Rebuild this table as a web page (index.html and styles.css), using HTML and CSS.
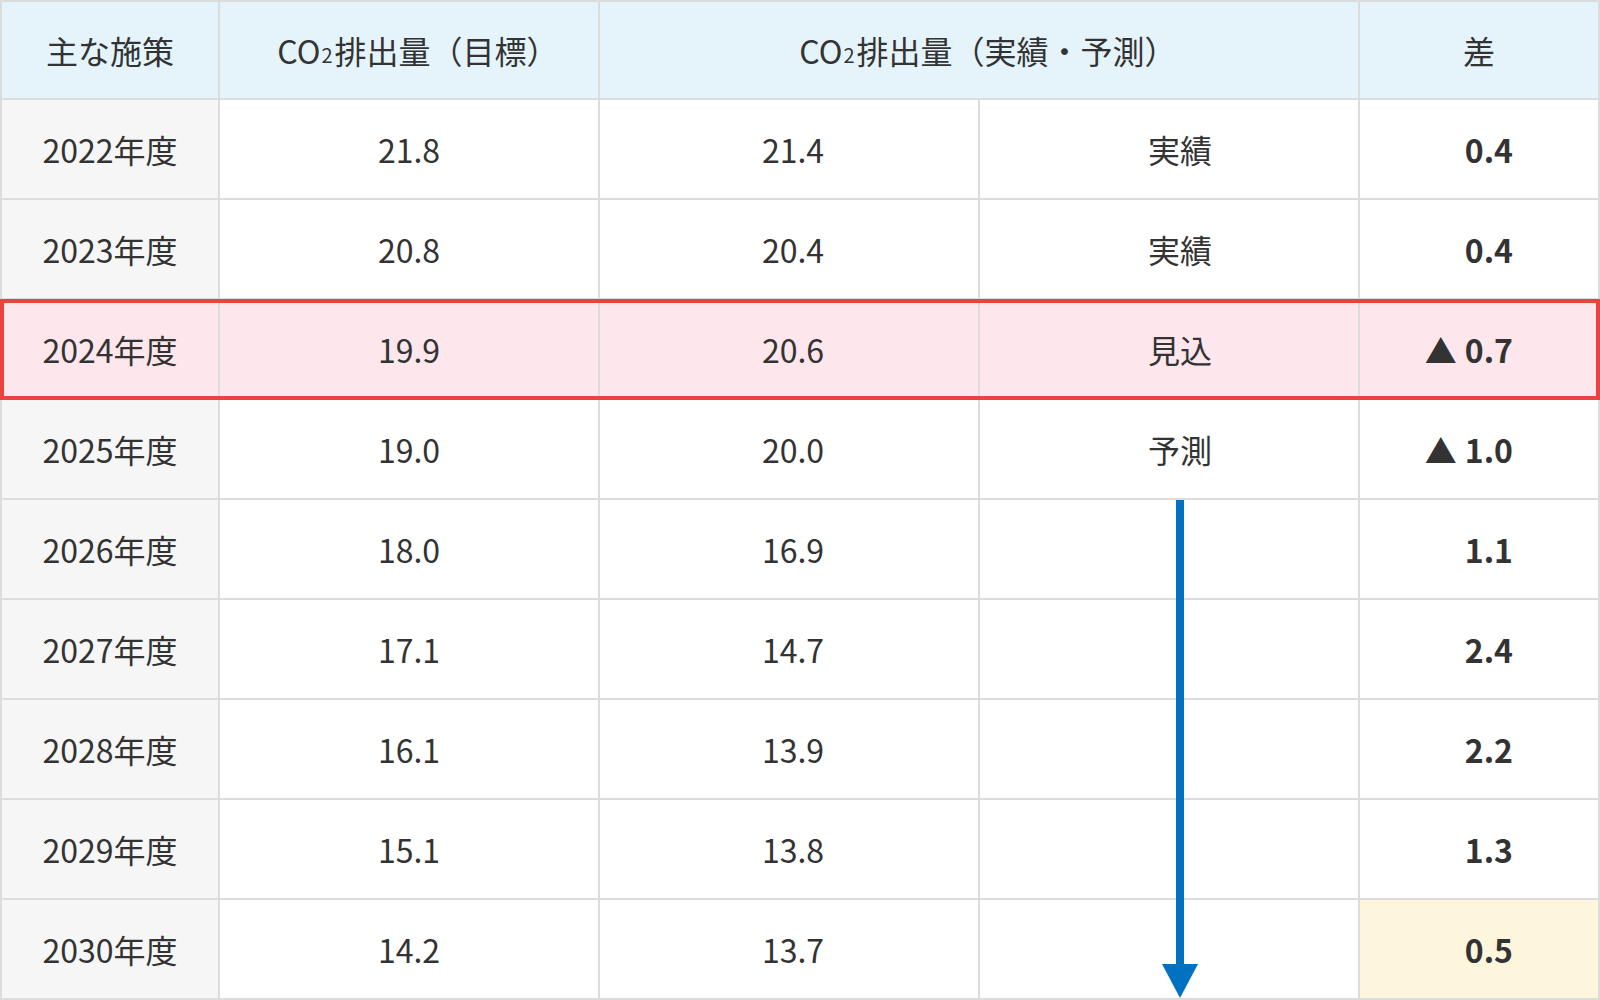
FILE: index.html
```html
<!DOCTYPE html>
<html lang="ja">
<head>
<meta charset="utf-8">
<title>CO2排出量</title>
<link rel="stylesheet" href="styles.css">
</head>
<body>
<div class="table">
  <div class="row r1">
    <div class="cell head">主な施策</div>
    <div class="cell head co2">CO<span class="sub">2</span>排出量（目標）</div>
    <div class="cell head co2 span2">CO<span class="sub">2</span>排出量（実績・予測）</div>
    <div class="cell head last">差</div>
  </div>

  <div class="row r2">
    <div class="cell year">2022年度</div>
    <div class="cell">21.8</div>
    <div class="cell actual">21.4</div>
    <div class="cell kind">実績</div>
    <div class="cell diff">0.4</div>
  </div>

  <div class="row r3">
    <div class="cell year">2023年度</div>
    <div class="cell">20.8</div>
    <div class="cell actual">20.4</div>
    <div class="cell kind">実績</div>
    <div class="cell diff">0.4</div>
  </div>

  <div class="row r4 hl">
    <div class="cell year">2024年度</div>
    <div class="cell">19.9</div>
    <div class="cell actual">20.6</div>
    <div class="cell kind">見込</div>
    <div class="cell diff"><span class="tri">▲</span>0.7</div>
  </div>

  <div class="row r5">
    <div class="cell year">2025年度</div>
    <div class="cell">19.0</div>
    <div class="cell actual">20.0</div>
    <div class="cell kind">予測</div>
    <div class="cell diff"><span class="tri">▲</span>1.0</div>
  </div>

  <div class="row r6">
    <div class="cell year">2026年度</div>
    <div class="cell">18.0</div>
    <div class="cell actual">16.9</div>
    <div class="cell kind"></div>
    <div class="cell diff">1.1</div>
  </div>

  <div class="row r7">
    <div class="cell year">2027年度</div>
    <div class="cell">17.1</div>
    <div class="cell actual">14.7</div>
    <div class="cell kind"></div>
    <div class="cell diff">2.4</div>
  </div>

  <div class="row r8">
    <div class="cell year">2028年度</div>
    <div class="cell">16.1</div>
    <div class="cell actual">13.9</div>
    <div class="cell kind"></div>
    <div class="cell diff">2.2</div>
  </div>

  <div class="row r9">
    <div class="cell year">2029年度</div>
    <div class="cell">15.1</div>
    <div class="cell actual">13.8</div>
    <div class="cell kind"></div>
    <div class="cell diff">1.3</div>
  </div>

  <div class="row r10">
    <div class="cell year">2030年度</div>
    <div class="cell">14.2</div>
    <div class="cell actual">13.7</div>
    <div class="cell kind"></div>
    <div class="cell diff goal">0.5</div>
  </div>

  <div class="highlight-frame"></div>
  <div class="arrow">
    <div class="arrow-line"></div>
    <svg class="arrow-head" width="36" height="34" viewBox="0 0 36 34"><polygon points="0,0 36,0 18,34" fill="#0072c1"/></svg>
  </div>
</div>
</body>
</html>
```

FILE: styles.css
```css
html, body {
  margin: 0;
  padding: 0;
  background: #ffffff;
}

body {
  font-family: "Noto Sans CJK JP", "Noto Sans", sans-serif;
  color: #333333;
}

.table {
  display: grid;
  grid-template-columns: 216px 378px 378px 378px 238px;
  grid-template-rows: 96px repeat(9, 98px);
  gap: 2px;
  padding: 2px;
  width: 1600px;
  height: 1000px;
  box-sizing: border-box;
  background: #dcdcdc;
}

.row {
  display: contents;
}

.r1 > .cell { grid-row: 1; }
.r2 > .cell { grid-row: 2; }
.r3 > .cell { grid-row: 3; }
.r4 > .cell { grid-row: 4; }
.r5 > .cell { grid-row: 5; }
.r6 > .cell { grid-row: 6; }
.r7 > .cell { grid-row: 7; }
.r8 > .cell { grid-row: 8; }
.r9 > .cell { grid-row: 9; }
.r10 > .cell { grid-row: 10; }

.row > .cell:nth-child(1) { grid-column: 1; }
.row > .cell:nth-child(2) { grid-column: 2; }
.row > .cell:nth-child(3) { grid-column: 3; }
.row > .cell:nth-child(4) { grid-column: 4; }
.row > .cell:nth-child(5) { grid-column: 5; }
.row > .cell.span2 { grid-column: 3 / span 2; }
.row > .cell.last { grid-column: 5; }

.cell {
  display: flex;
  align-items: center;
  justify-content: center;
  background: #ffffff;
  font-size: 32px;
  line-height: 1;
  white-space: nowrap;
}

.head {
  background: #e5f4fb;
}

.co2 {
  padding-left: 18px;
}

.sub {
  display: inline-block;
  font-size: 20px;
  margin: 0 2px 0 1px;
  transform: translateY(5px);
}

.year {
  background: #f6f6f6;
}

.actual {
  padding-left: 8px;
}

.kind {
  padding-left: 22px;
}

.diff {
  justify-content: flex-end;
  padding-right: 85px;
  font-weight: 700;
}

.tri {
  font-weight: 400;
  font-size: 32px;
  margin-right: 8px;
}

.goal {
  background: #fdf6dc;
}

.hl > .cell {
  background: #fde6ec;
}

.highlight-frame {
  grid-row: 4;
  grid-column: 1 / -1;
  margin: -1px -2px -2px -2px;
  border: 4px solid #e84242;
  box-sizing: border-box;
  pointer-events: none;
}

.arrow {
  grid-row: 6 / span 5;
  grid-column: 4;
  display: flex;
  flex-direction: column;
  align-items: center;
  padding-left: 22px;
  pointer-events: none;
}

.arrow-line {
  flex: 1;
  width: 8px;
  background: #0072c1;
}

.arrow-head {
  display: block;
  flex: none;
}
```
